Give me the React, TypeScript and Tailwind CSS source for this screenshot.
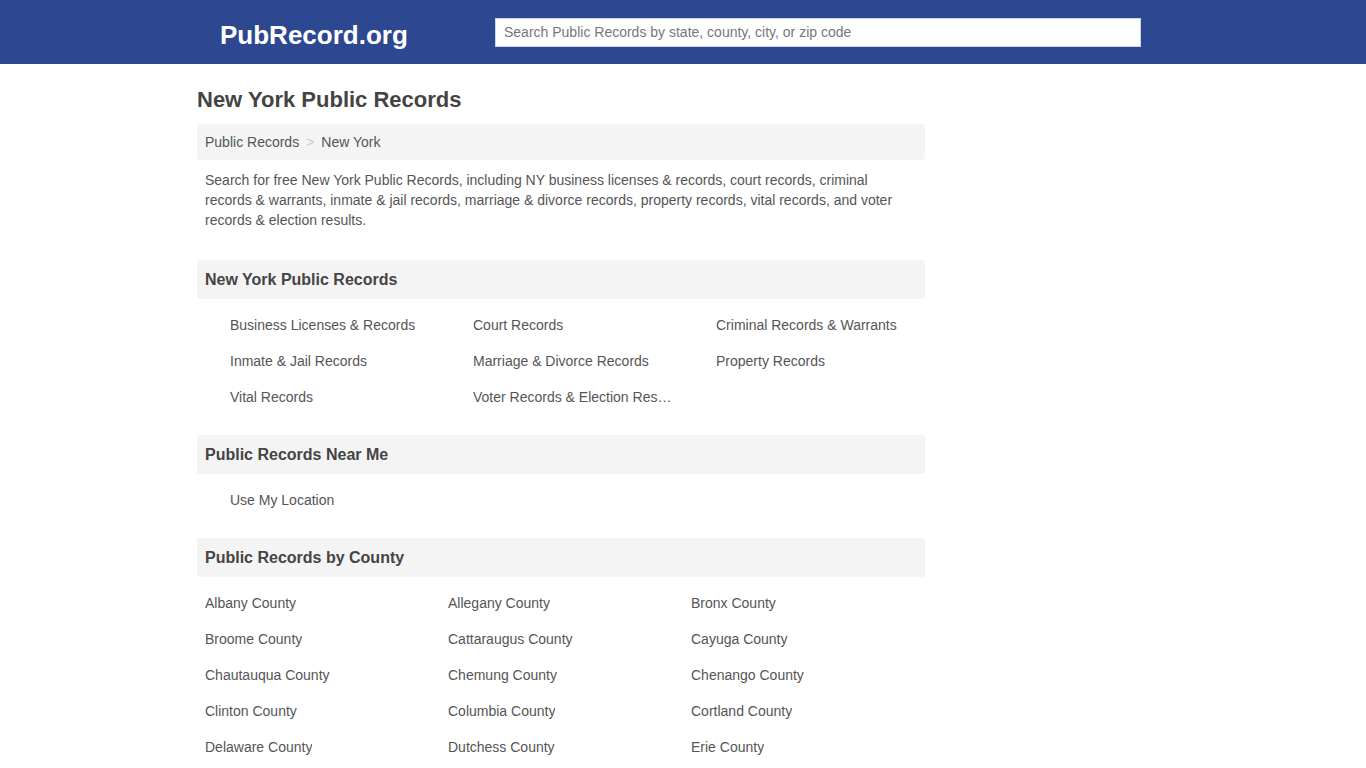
import React from 'react';

const recordLinks = [
  'Business Licenses & Records',
  'Court Records',
  'Criminal Records & Warrants',
  'Inmate & Jail Records',
  'Marriage & Divorce Records',
  'Property Records',
  'Vital Records',
  'Voter Records & Election Results',
];

const counties = [
  'Albany County',
  'Allegany County',
  'Bronx County',
  'Broome County',
  'Cattaraugus County',
  'Cayuga County',
  'Chautauqua County',
  'Chemung County',
  'Chenango County',
  'Clinton County',
  'Columbia County',
  'Cortland County',
  'Delaware County',
  'Dutchess County',
  'Erie County',
];

const SectionHeader: React.FC<{ title: string }> = ({ title }) => (
  <div className="bg-[#f4f4f4] rounded-[3px] h-[39px] px-2 flex items-center">
    <h2 className="text-[16px] font-bold text-[#444]">{title}</h2>
  </div>
);

const LinkGrid: React.FC<{ items: string[]; indent?: boolean }> = ({ items, indent }) => (
  <ul className={`grid grid-cols-[243px_243px_242px] mt-2 ${indent ? 'pl-[33px]' : 'pl-2'}`}>
    {items.map((item) => (
      <li key={item} className="h-9 flex items-center">
        <a href="#" className="block max-w-[204px] truncate text-[14px] text-[#555] hover:underline">
          {item}
        </a>
      </li>
    ))}
  </ul>
);

const App: React.FC = () => {
  return (
    <div className="min-h-screen bg-white text-[#555]" style={{ fontFamily: '"Liberation Sans", Arial, sans-serif' }}>
      <header className="bg-[#2d4891] h-16">
        <div className="w-[970px] mx-auto h-full flex items-center">
          <a href="#" className="w-[297px] pl-[22px] text-white text-[26px] font-bold leading-none pt-[5px]">
            PubRecord.org
          </a>
          <input
            type="text"
            placeholder="Search Public Records by state, county, city, or zip code"
            className="w-[646px] h-[29px] bg-white border border-[#c9d6ee] px-2 text-[14px] text-[#555] placeholder:text-[#777] outline-none"
          />
        </div>
      </header>

      <main className="w-[970px] mx-auto pt-6">
        <div className="w-[728px] -ml-px">
          <h1 className="text-[22px] font-bold text-[#444] leading-6">New York Public Records</h1>
          <div className="mt-3 bg-[#f4f4f4] rounded-[3px] h-9 px-2 flex items-center text-[14px] text-[#555]">
            <a href="#" className="hover:underline">Public Records</a>
            <span className="text-[#ccc] px-[7px]">&gt;</span>
            <span>New York</span>
          </div>
          <p className="mt-[10px] px-2 text-[14px] leading-5 text-[#555]">
            Search for free New York Public Records, including NY business licenses &amp; records, court records, criminal
            records &amp; warrants, inmate &amp; jail records, marriage &amp; divorce records, property records, vital records, and voter
            records &amp; election results.
          </p>

          <section className="mt-[30px]">
            <SectionHeader title="New York Public Records" />
            <LinkGrid items={recordLinks} indent />
          </section>

          <section className="mt-5">
            <SectionHeader title="Public Records Near Me" />
            <LinkGrid items={['Use My Location']} indent />
          </section>

          <section className="mt-5">
            <SectionHeader title="Public Records by County" />
            <LinkGrid items={counties} />
          </section>
        </div>
      </main>
    </div>
  );
};

export default App;
